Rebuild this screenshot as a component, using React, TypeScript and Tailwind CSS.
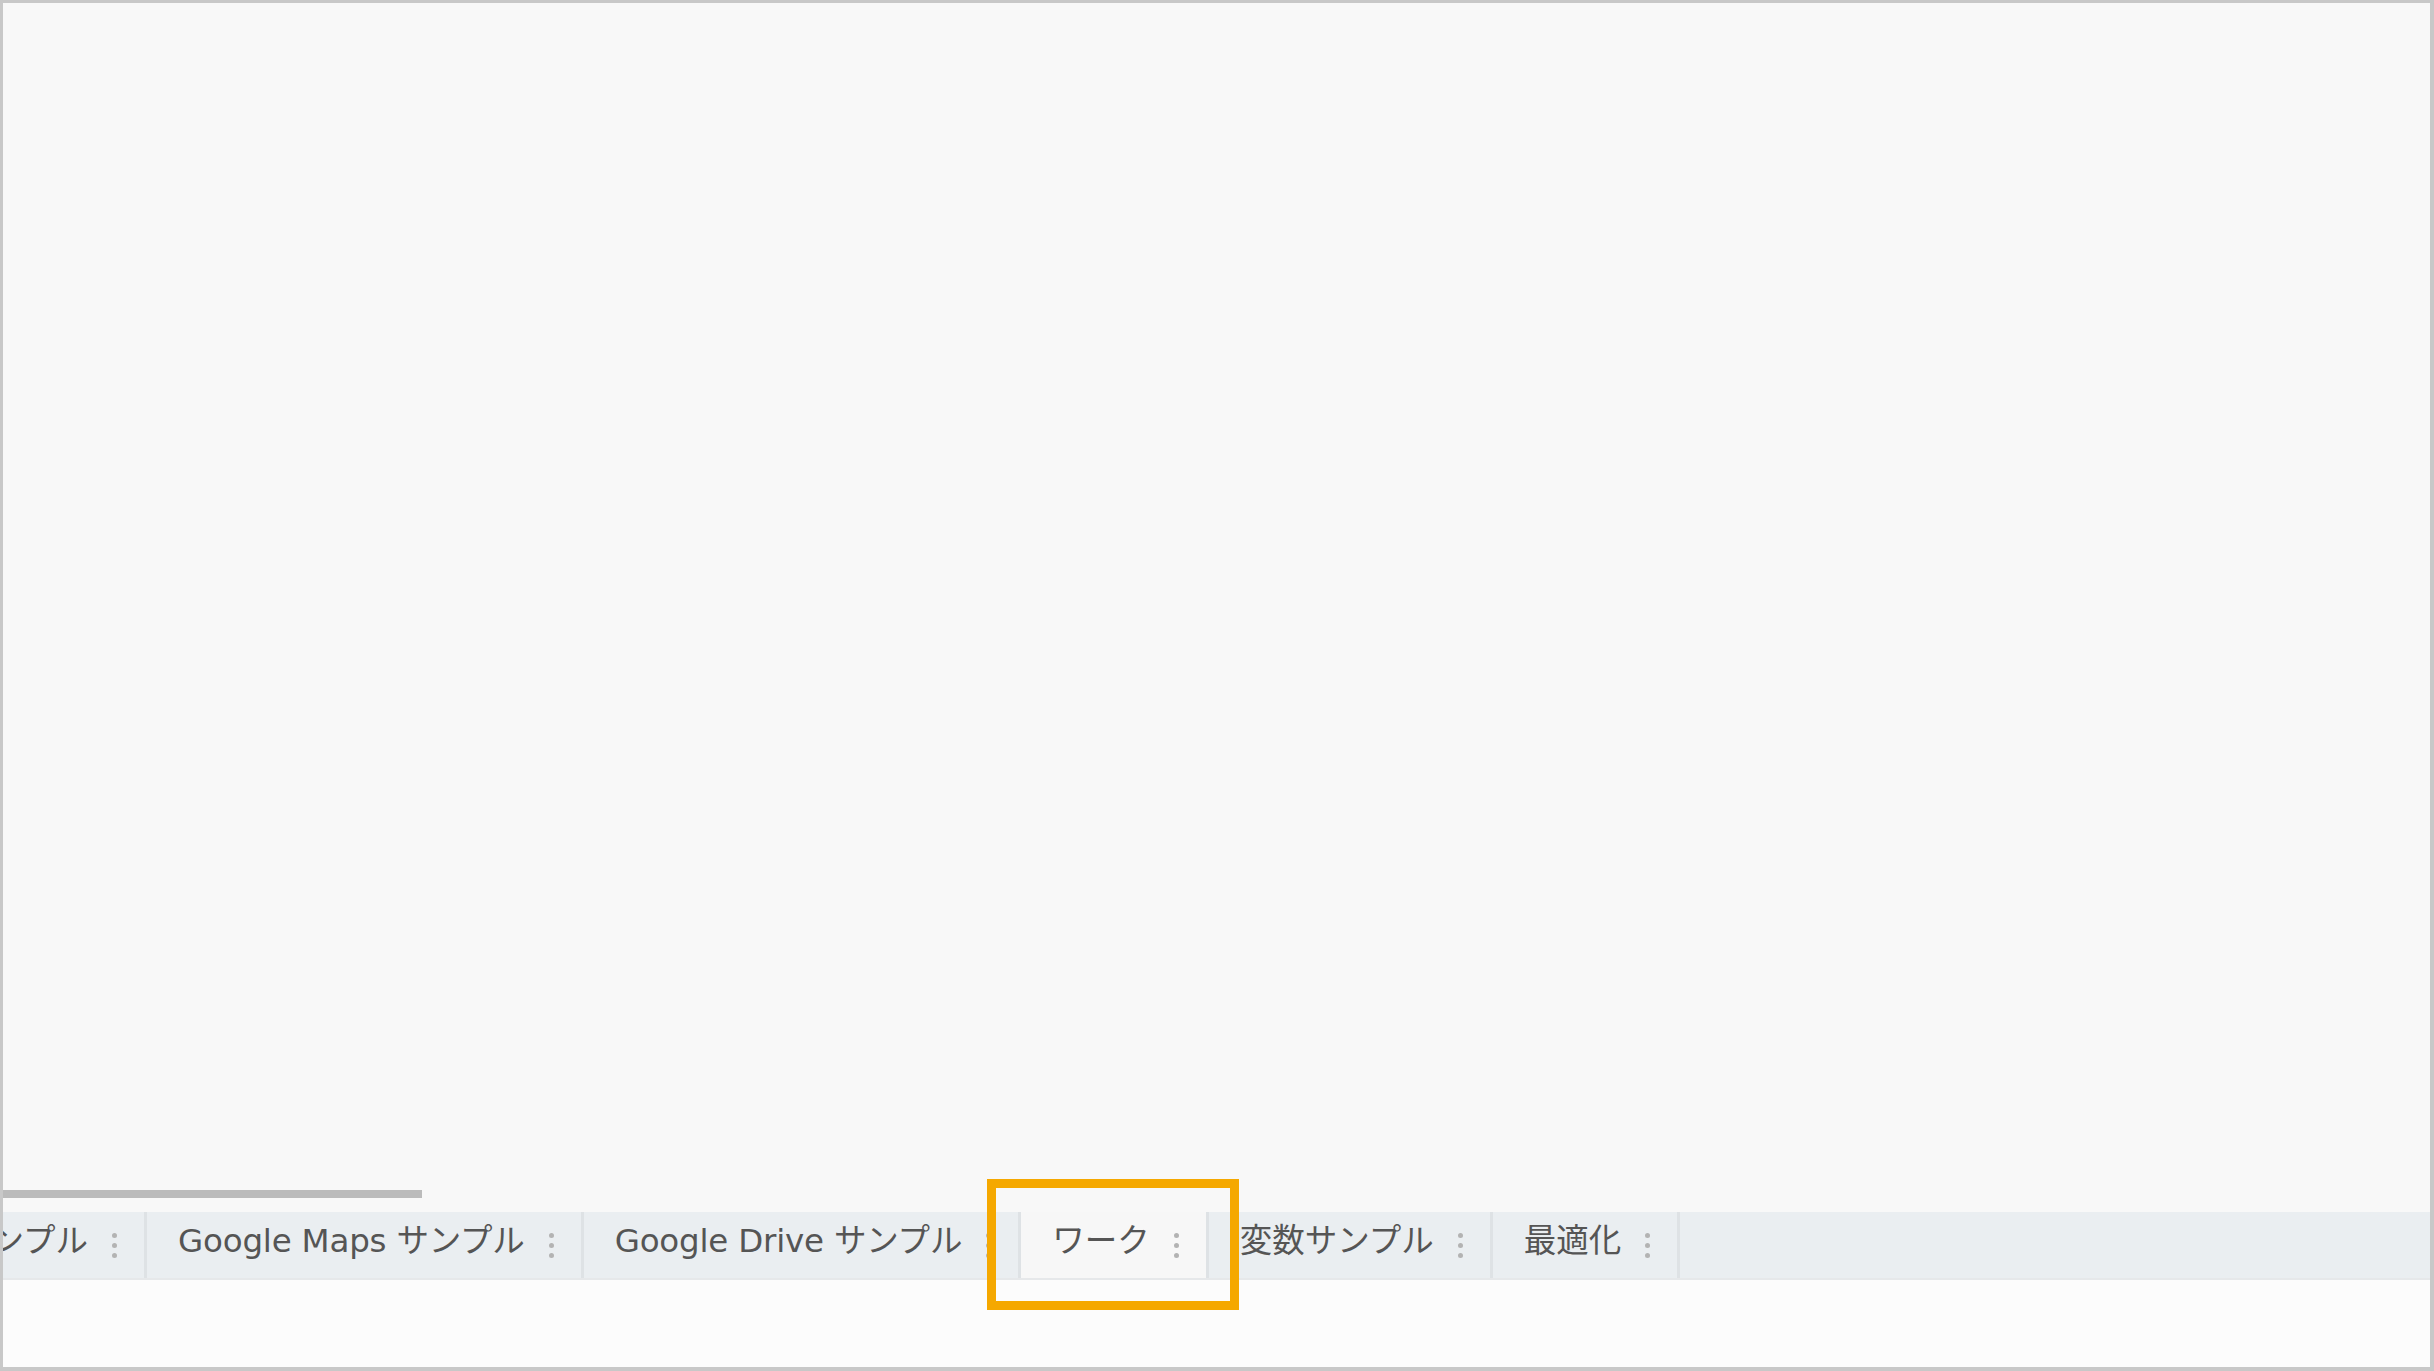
import React from 'react';

type Tab = { label: string; active?: boolean; latin?: boolean };

const tabs: Tab[] = [
  { label: 'サンプル' },
  { label: 'Google Maps サンプル', latin: true },
  { label: 'Google Drive サンプル', latin: true },
  { label: 'ワーク', active: true },
  { label: '変数サンプル' },
  { label: '最適化' },
];

const Kebab: React.FC = () => (
  <div className="flex flex-col gap-[5px]">
    <span className="block w-[5px] h-[5px] rounded-full bg-[#b3b3b3]" />
    <span className="block w-[5px] h-[5px] rounded-full bg-[#b3b3b3]" />
    <span className="block w-[5px] h-[5px] rounded-full bg-[#b3b3b3]" />
  </div>
);

const App: React.FC = () => {
  return (
    <div
      className="relative h-screen w-screen flex flex-col overflow-hidden border-t-[3px] border-l-[3px] border-r-4 border-b-4 border-[#c8c8c8]"
      style={{ fontFamily: '"DejaVu Sans", "Noto Sans CJK JP", sans-serif' }}
    >
      {/* Sheet area */}
      <div className="flex-1 bg-[#f8f8f8] flex flex-col justify-end">
        <div className="w-[419px] h-[8px] bg-[#bbbbbb] mb-[14px]" />
      </div>

      {/* Sheet tabs */}
      <div className="h-[66px] bg-[#eaeef1] overflow-hidden flex">
        <div className="flex ml-[-75px] h-full">
          {tabs.map((t, i) => (
            <div
              key={i}
              className={`flex items-center h-full pl-[31px] pr-[27px] gap-[24px] border-r-[3px] border-[#dee2e5] ${
                t.active ? 'bg-[#f7f7f7]' : ''
              }`}
            >
              <span
                className={`text-[32.5px] leading-none text-[#555555] whitespace-nowrap mb-[7px] ${
                  t.latin ? 'tracking-[-0.2px]' : ''
                }`}
              >
                {t.label}
              </span>
              <Kebab />
            </div>
          ))}
        </div>
      </div>
      <div className="h-[2px] bg-[#e6e8ea]" />
      <div className="h-[87px] bg-[#fcfcfc]" />

      {/* Highlight */}
      <div className="absolute left-[984px] top-[1176px] w-[252px] h-[131px] border-[9px] border-[#f5a800]" />
    </div>
  );
};

export default App;
